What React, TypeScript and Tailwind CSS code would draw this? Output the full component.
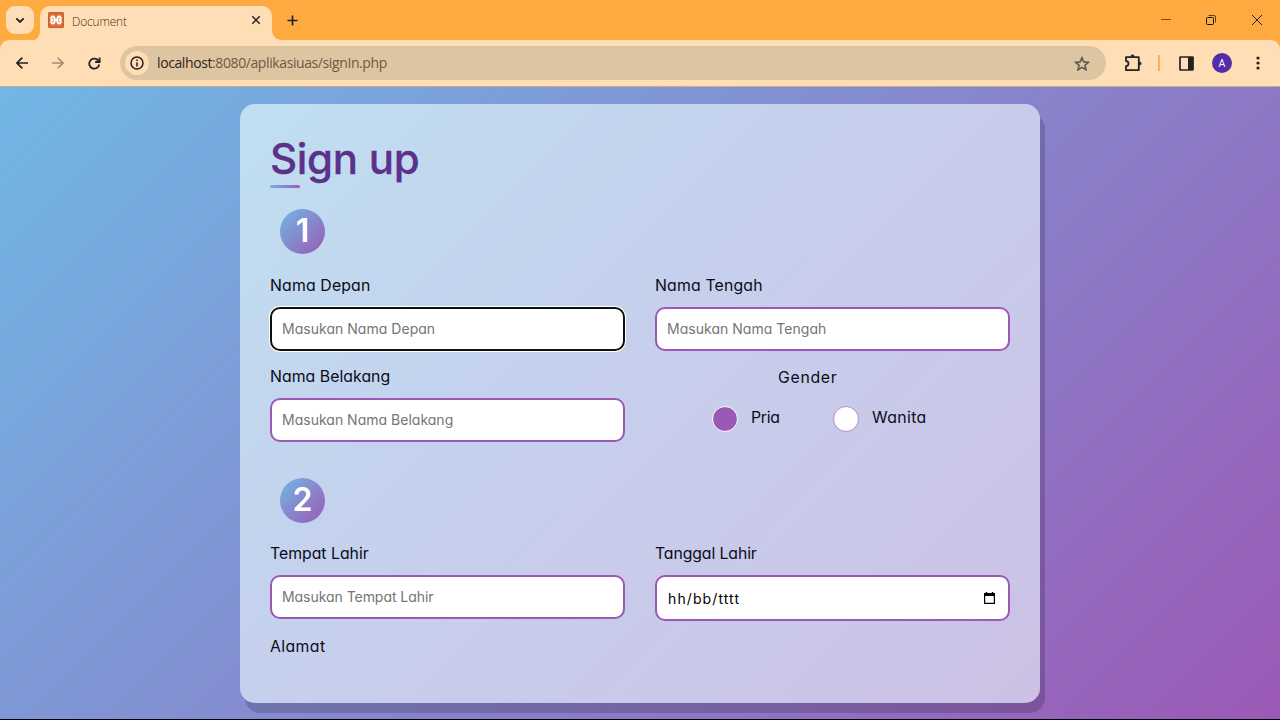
import React from "react";

type TextFieldProps = {
  label: string;
  labelClass: string;
  placeholder: string;
  inputClass: string;
};

function Label({ children, className }: { children: React.ReactNode; className: string }) {
  return <span className={`flex h-6 items-center whitespace-nowrap pb-px text-[15.800px] font-normal text-[#0c0c18] ${className}`}>{children}</span>;
}

function TextField({ label, labelClass, placeholder, inputClass }: TextFieldProps) {
  return (
    <label className="block w-[355px]">
      <Label className={labelClass}>{label}</Label>
      <input
        type="text"
        placeholder={placeholder}
        className={`mt-[9px] block h-11 w-full rounded-[10px] border-2 bg-white px-2.5 pb-0.5 text-[14px] font-normal text-black placeholder:text-[#757575] placeholder:opacity-100 outline-none ${inputClass}`}
      />
    </label>
  );
}

function Step({ n }: { n: number }) {
  return (
    <div className="ml-2.5 flex size-[45px] items-center justify-center rounded-full bg-[linear-gradient(135deg,#71b7e6,#9b59b6)] pb-px text-[32px] font-semibold leading-none text-white">
      {n}
    </div>
  );
}

function TabStrip() {
  return (
    <div className="flex h-10 shrink-0 bg-[#ffaa40]">
      <div className="ml-1.5 mt-1.5 flex size-7 items-center justify-center rounded-[9px] bg-[#ffdeb5]">
        <svg width="10" height="7" viewBox="0 0 10 7" fill="none" stroke="#222" strokeWidth="1.800">
          <path d="M1.300 1.300l3.700 3.700 3.700-3.700" />
        </svg>
      </div>
      <svg className="mt-[30px]" width="6" height="10" viewBox="0 0 6 10">
        <path d="M6 0v10H0C4 9 6 5 6 0z" fill="#ffdeb5" />
      </svg>
      <div className="mt-1.5 flex h-[34px] w-[232px] items-center rounded-t-[10px] bg-[#ffdeb5] pb-1.5 pl-2">
        <svg width="16" height="16" viewBox="0 0 16 16">
          <rect width="16" height="16" rx="1.5" fill="#c9602f" />
          <rect x="1" y="1.500" width="14" height="13.500" rx="1" fill="#dc7440" />
          <g fill="none" stroke="#fff" strokeWidth="2" strokeLinejoin="round" strokeLinecap="round">
            <path d="M4.300 8C2.700 7.300 2.900 4.500 4.800 4.500c1.800 0 1.900 1.300 1.900 3.500s-.1 3.500-1.900 3.500C2.900 11.500 2.700 8.700 4.300 8z" />
            <path d="M11.700 8c1.600-.7 1.400-3.500-.5-3.500-1.800 0-1.900 1.300-1.900 3.500s.1 3.500 1.900 3.500c1.900 0 2.100-2.800.5-3.500zM6.700 8h2.600" />
          </g>
        </svg>
        <span className="ml-2 pt-[3px] text-[11.800px] font-[350] tracking-[-0.1px] text-[#3d2f1f]">Document</span>
        <svg className="ml-auto mr-[11px]" width="10" height="10" viewBox="0 0 10 10" stroke="#222" strokeWidth="1.5">
          <path d="M1.300 1.300l7.400 7.400M8.700 1.300L1.300 8.700" />
        </svg>
      </div>
      <svg className="mt-[30px]" width="10" height="10" viewBox="0 0 10 10">
        <path d="M0 0v10h10C4 10 0 6 0 0z" fill="#ffdeb5" />
      </svg>
      <svg className="ml-[5px] mt-[15px]" width="11" height="11" viewBox="0 0 11 11" stroke="#222" strokeWidth="1.700">
        <path d="M5.500 .5v10M.5 5.500h10" />
      </svg>
      <div className="ml-auto flex h-10 items-center text-black">
        <svg className="mr-[35px]" width="10" height="12" viewBox="0 0 10 12" stroke="#7a4f18" strokeWidth="1">
          <path d="M0 5.500h10" />
        </svg>
        <svg className="mr-[36px]" width="10" height="10" viewBox="0 0 10 10" fill="none" stroke="#111" strokeWidth="1">
          <rect x=".5" y="2.500" width="7" height="7" rx="1" />
          <path d="M2.500 .5H8a1.500 1.500 0 0 1 1.500 1.500v5.500" stroke="#5e3e15" />
        </svg>
        <svg className="mr-[18px]" width="10" height="10" viewBox="0 0 10 10" stroke="#222" strokeWidth="1">
          <path d="M0 0l10 10M10 0L0 10" />
        </svg>
      </div>
    </div>
  );
}

function Toolbar() {
  return (
    <div className="h-[47px] shrink-0 bg-[#ffaa40]">
      <div className="flex h-full items-center rounded-t-[9px] border-b border-[#c5ad92] bg-[#ffdeb5] pl-4">
        <svg width="12" height="12" viewBox="0 0 12 12" fill="none" stroke="#222" strokeWidth="1.700">
          <path d="M12 6H1.200M6.300 .7L1 6l5.300 5.300" />
        </svg>
        <svg className="ml-6" width="12" height="12" viewBox="0 0 12 12" fill="none" stroke="#a48d72" strokeWidth="1.600">
          <path d="M0 6h10.800M5.700 .7L11 6l-5.300 5.300" />
        </svg>
        <svg className="ml-6" width="13" height="13" viewBox="0 0 13 13" fill="none" stroke="#222" strokeWidth="1.800">
          <path d="M11.200 7.500A5 5 0 1 1 9.500 2.800L11 4.200" />
          <path d="M11.600 .5v4.500H7.200" />
        </svg>
        <div className="ml-[19px] flex h-[34px] w-[986px] items-center rounded-full bg-[#dec5a2] pl-[5px]">
          <div className="flex size-6 items-center justify-center rounded-full bg-[#ffdeb5]">
            <svg width="14" height="14" viewBox="0 0 14 14" fill="none" stroke="#222">
              <circle cx="7" cy="7" r="6" strokeWidth="1.500" />
              <path d="M7 6.200v4.200M7 3.500v1.600" strokeWidth="1.500" />
            </svg>
          </div>
          <span className="ml-2 whitespace-nowrap pb-px text-[14px] font-normal tracking-[-0.4px] text-[#6d5a43]">
            <span className="text-[#2f2618]">localhost</span>:8080/aplikasiuas/signIn.php
          </span>
          <svg className="ml-auto mr-[16px]" width="16" height="15" viewBox="0 0 16 15" fill="none" stroke="#5f5a54" strokeWidth="1.600">
            <path d="M8 1.700l1.800 4.200 4.600.4-3.500 3 1.100 4.500L8 11.400l-4 2.400 1.100-4.500-3.500-3 4.600-.4z" />
          </svg>
        </div>
        <svg className="ml-[19px]" width="18" height="18" viewBox="0 0 18 18" fill="none" stroke="#222" strokeWidth="1.800" strokeLinejoin="round">
          <path d="M1 3.200h12.800v12.900H1v-4a2.300 2.300 0 0 0 0-5z" />
          <path d="M5.800 2.500a1.700 1.700 0 0 1 3.400 0zM14.500 7.800a1.700 1.700 0 0 1 0 3.400z" fill="#222" strokeWidth=".6" />
        </svg>
        <div className="ml-[15px] h-4 w-0.5 bg-[#ffb04c]" />
        <svg className="ml-[19px]" width="15" height="15" viewBox="0 0 15 15">
          <rect x="1" y="1" width="13" height="13" rx=".5" fill="none" stroke="#222" strokeWidth="1.700" />
          <path d="M9 1h5v13H9z" fill="#222" />
        </svg>
        <div className="ml-[18px] flex size-5 items-center justify-center rounded-full bg-[#512da8] pt-px font-['Roboto',sans-serif] text-[10.500px] text-white">A</div>
        <svg className="ml-[24px]" width="4" height="14" viewBox="0 0 4 14" fill="#222">
          <circle cx="2" cy="2" r="1.600" />
          <circle cx="2" cy="7" r="1.600" />
          <circle cx="2" cy="12" r="1.600" />
        </svg>
      </div>
    </div>
  );
}

export default function App() {
  return (
    <div className="flex h-[720px] w-[1280px] flex-col overflow-hidden border-b border-black font-['Open_Sans',sans-serif]">
      <TabStrip />
      <Toolbar />
      <main className="flex-1 bg-[linear-gradient(135deg,#71b7e6,#9b59b6)] pt-[16.500px] font-['Inter',sans-serif] [font-feature-settings:'cv11']">
        <form className="mx-auto h-[599.500px] w-[800px] rounded-[15px] bg-[linear-gradient(135deg,#c0dff2_0%,#c3d5ee_28%,#c8cceb_58%,#ccc1e4_100%)] px-[30px] pt-[29px] shadow-[5px_10px_0_rgba(0,0,0,0.17)]">
          <h1 className="flex h-[52px] items-center whitespace-nowrap text-[42px] font-medium tracking-[-0.3px] text-[#5b3189] [-webkit-text-stroke:0.3px_#5b3189]">Sign up</h1>
          <div className="h-[3.500px] w-[30px] rounded-full bg-[linear-gradient(135deg,#71b7e6,#9b59b6)]" />
          <div className="mt-[21px]">
            <Step n={1} />
          </div>
          <div className="mt-5 flex justify-between">
            <TextField label="Nama Depan" labelClass="tracking-[0.16px]" placeholder="Masukan Nama Depan" inputClass="border-[#101010] shadow-[0_0_0_1px_white] tracking-[0.03px]" />
            <TextField label="Nama Tengah" labelClass="tracking-[0.18px]" placeholder="Masukan Nama Tengah" inputClass="border-[#9b59b6] tracking-[0.03px]" />
          </div>
          <div className="mt-[14px] flex justify-between">
            <TextField label="Nama Belakang" labelClass="tracking-[0.05px]" placeholder="Masukan Nama Belakang" inputClass="border-[#9b59b6] tracking-[0.01px]" />
            <fieldset className="w-[355px]">
              <Label className="ml-[123px] mt-px tracking-[0.7px]">Gender</Label>
              <div className="mt-[16px] flex items-center pl-[57px]">
                <span className="size-[26px] rounded-full border border-white bg-[#9b59b6]" />
                <Label className="-mt-0.5 ml-[13px] w-[82px] tracking-[-0.3px]">Pria</Label>
                <span className="size-[26px] rounded-full border border-[#b98bcb] bg-white" />
                <Label className="-mt-0.5 ml-[13px] tracking-[0.4px]">Wanita</Label>
              </div>
            </fieldset>
          </div>
          <div className="mt-[35.500px]">
            <Step n={2} />
          </div>
          <div className="mt-[19.500px] flex items-start justify-between">
            <TextField label="Tempat Lahir" labelClass="pb-0 tracking-[0px]" placeholder="Masukan Tempat Lahir" inputClass="border-[#9b59b6] tracking-[-0.05px]" />
            <div className="w-[355px]">
              <Label className="pb-0 tracking-[-0.1px]">Tanggal Lahir</Label>
              <div className="mt-[9px] flex h-[46px] items-center justify-between rounded-[10px] border-2 border-[#9b59b6] bg-white pl-[11px] pr-[13px] text-[14px] font-normal text-black">
                <span className="tracking-[1.100px]">hh/bb/tttt</span>
                <svg className="-mt-px" width="11" height="12" viewBox="0 0 11 12">
                  <path d="M0 1h1.700V0h1.500v1h4.600V0h1.500v1H11v11H0zM1.200 4v6.800h8.600V4z" fill="#000" fillRule="evenodd" />
                </svg>
              </div>
            </div>
          </div>
          <Label className="mt-[14px] tracking-[0.4px]">Alamat</Label>
        </form>
      </main>
    </div>
  );
}
